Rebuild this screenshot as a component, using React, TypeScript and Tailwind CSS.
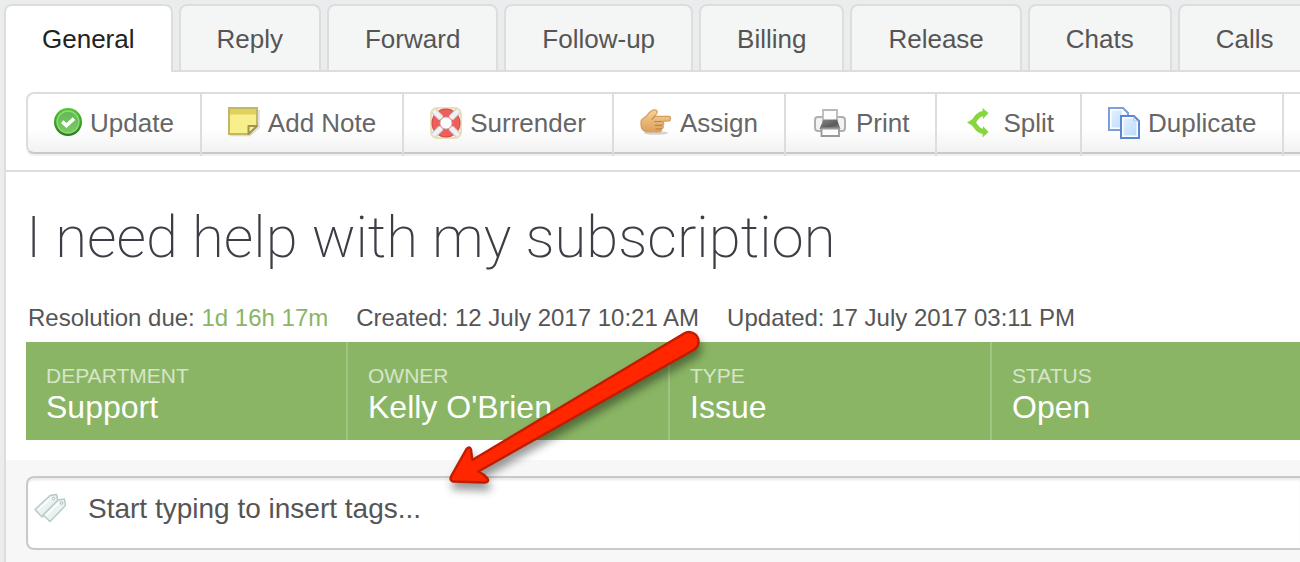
import type { ReactNode } from "react";

const tabs = ["General", "Reply", "Forward", "Follow-up", "Billing", "Release", "Chats", "Calls"];

function CheckIcon() {
  return (
    <svg className="h-8 w-7 shrink-0" viewBox="0 0 28 32" aria-hidden="true">
      <defs>
        <linearGradient id="checkRing" x1="0" y1="0" x2="0" y2="1">
          <stop offset="0" stopColor="#55c832" />
          <stop offset="1" stopColor="#267f1c" />
        </linearGradient>
        <linearGradient id="checkFace" x1="0" y1="0" x2="0" y2="1">
          <stop offset="0" stopColor="#62b956" />
          <stop offset="1" stopColor="#7bcb64" />
        </linearGradient>
      </defs>
      <circle cx="14" cy="15" r="14" fill="url(#checkRing)" />
      <circle cx="14" cy="15" r="11" fill="url(#checkFace)" stroke="#93d97d" strokeWidth="1.300" />
      <path d="M8.200 14.600l4.200 4 7.600-7" fill="none" stroke="#fff" strokeWidth="3.600" />
    </svg>
  );
}

function NoteIcon() {
  return (
    <svg className="h-8 w-8 shrink-0" viewBox="0 0 32 32" aria-hidden="true">
      <path d="M2 28.500h20l9-8V3" fill="none" stroke="#bbb" strokeWidth="1.600" opacity=".5" />
      <path d="M1 1h28v18l-8 8H1z" fill="#f6ef8c" stroke="#c3b767" strokeWidth="2" />
      <path d="M2 2h26v5.500H2z" fill="#e0d05e" />
      <path d="M20.500 27v-8H29z" fill="#f7f0a4" stroke="#a3954a" strokeWidth="2" strokeLinejoin="round" />
    </svg>
  );
}

function BuoyIcon() {
  return (
    <svg className="h-8 w-8 shrink-0" viewBox="0 0 32 32" aria-hidden="true">
      <rect x="1" y="1" width="30" height="30" rx="6" fill="#f8f4e6" stroke="#eadfb8" strokeWidth="2" />
      <circle cx="16" cy="16" r="10" fill="none" stroke="#cf4a4a" strokeWidth="9" />
      <circle cx="16" cy="16" r="10" fill="none" stroke="#ee5f5c" strokeWidth="7" />
      <path
        d="M3.500 3.500l7.500 7.500M28.500 3.500L21 11M3.500 28.500L11 21M28.500 28.500L21 21"
        stroke="#c9c9ce"
        strokeWidth="6.500"
      />
      <path
        d="M3.500 3.500l8 8M28.500 3.500l-8 8M3.500 28.500l8-8M28.500 28.500l-8-8"
        stroke="#f1f1f4"
        strokeWidth="4.500"
      />
      <circle cx="16" cy="16" r="6" fill="#fff" stroke="#cfb0b0" strokeWidth="1" />
    </svg>
  );
}

function HandIcon() {
  return (
    <svg className="h-8 w-8 shrink-0" viewBox="0 0 32 32" aria-hidden="true">
      <defs>
        <linearGradient id="skin" x1="0" y1="0" x2="0" y2="1">
          <stop offset="0" stopColor="#f8d295" />
          <stop offset="1" stopColor="#dca05a" />
        </linearGradient>
      </defs>
      <ellipse cx="16" cy="26" rx="12" ry="1.800" fill="#aaa" opacity=".5" />
      <path
        d="M1 14c0-2 3-3 5.500-5 2-2.400 4.500-6 7.500-6.100 2.600-.2 4 1.600 2.800 3.600L14.500 9.400H29c2 0 2 4.200 0 4.500l-6.500.6c1.700 1 1.600 3 .3 3.800 1 1.300.5 3-1.200 3.500.2 2-.9 3-2.800 3H8C3.500 24.800 1 21.700 1 18z"
        fill="url(#skin)"
        stroke="#d59d5c"
        strokeWidth="1.200"
      />
      <path d="M14 14.500h8M15 18.300h7.500M15.500 21.800h6M14.500 9.600l-3 3" fill="none" stroke="#c08543" strokeWidth="1.200" />
    </svg>
  );
}

function PrinterIcon() {
  return (
    <svg className="h-8 w-9 shrink-0" viewBox="0 0 36 32" aria-hidden="true">
      <defs>
        <linearGradient id="tray" x1="0" y1="0" x2="1" y2="1">
          <stop offset="0" stopColor="#8a8a8a" />
          <stop offset=".6" stopColor="#5c5c5c" />
          <stop offset="1" stopColor="#858585" />
        </linearGradient>
      </defs>
      <rect x="3" y="10" width="30" height="14" rx="3" fill="#f3f3f3" stroke="#b0b0b0" strokeWidth="2" />
      <path d="M11 14V3h14v11z" fill="#fcfcfc" stroke="#b8b8b8" strokeWidth="1.800" />
      <path d="M11.500 12.500h13.500l3.500 9.500h-21z" fill="url(#tray)" />
      <path d="M9.500 21.500h17.500v7.500H9.500z" fill="#fcfcfc" stroke="#999" strokeWidth="1.800" />
    </svg>
  );
}

function SplitIcon() {
  return (
    <svg className="h-8 w-8 shrink-0" viewBox="0 0 32 32" aria-hidden="true">
      <path
        d="M21 6.300C15.500 7 13.500 10.500 10 15.500 13.500 20.500 15.500 24 21 24.700"
        fill="none"
        stroke="#86d640"
        strokeWidth="5"
      />
      <path d="M19.500 1l6 5-5.500 6zM19.500 30.500l6-5.500-5.500-6zM4 15.500l7.500-4.500v9z" fill="#86d640" />
    </svg>
  );
}

function DuplicateIcon() {
  return (
    <svg className="h-8 w-8 shrink-0" viewBox="0 0 32 32" aria-hidden="true">
      <defs>
        <linearGradient id="sheet" x1="0" y1="0" x2="1" y2="1">
          <stop offset="0" stopColor="#e3f0ff" />
          <stop offset="1" stopColor="#bcdafc" />
        </linearGradient>
      </defs>
      <path d="M1 1h14l5 5v17H1z" fill="#fff" stroke="#7b9fde" strokeWidth="2" />
      <path d="M3.500 3.500h10.500v4H18v13H3.500z" fill="url(#sheet)" />
      <path d="M13 9h13l5 5v17H13z" fill="#fff" stroke="#5a86d4" strokeWidth="2" />
      <path d="M15.500 11.500h10V15h3v13.500h-13z" fill="url(#sheet)" />
      <path d="M26 9.500V14h4.500" fill="none" stroke="#9bbbea" strokeWidth="1.200" />
    </svg>
  );
}

function TagsIcon() {
  return (
    <svg className="h-8 w-8 shrink-0" viewBox="0 0 32 32" aria-hidden="true">
      <g fill="#e9f3f2" stroke="#b9caca" strokeWidth="1.500" strokeLinejoin="round">
        <path d="M1 16.500L16 2.500 22.500 1.500 24 8 8 24z" />
        <path d="M9 22L24 7l6.500-1 1 6.500L16 28.500z" />
      </g>
      <path d="M4 17L17.500 4.500M12 22.500L25.500 9" stroke="#fff" strokeWidth="1.400" />
      <g fill="#fff" stroke="#a9baba">
        <circle cx="19.500" cy="5.500" r="1.300" />
        <circle cx="27.500" cy="10" r="1.300" />
      </g>
    </svg>
  );
}

const actions: { label: string; icon: ReactNode }[] = [
  { label: "Update", icon: <CheckIcon /> },
  { label: "Add Note", icon: <NoteIcon /> },
  { label: "Surrender", icon: <BuoyIcon /> },
  { label: "Assign", icon: <HandIcon /> },
  { label: "Print", icon: <PrinterIcon /> },
  { label: "Split", icon: <SplitIcon /> },
  { label: "Duplicate", icon: <DuplicateIcon /> },
];

const properties = [
  { label: "DEPARTMENT", value: "Support" },
  { label: "OWNER", value: "Kelly O'Brien" },
  { label: "TYPE", value: "Issue" },
  { label: "STATUS", value: "Open" },
];

function Arrow() {
  return (
    <svg
      className="pointer-events-none absolute left-[440px] top-[322px] h-[180px] w-[270px] drop-shadow-[2px_7px_4px_rgba(0,0,0,0.4)]"
      viewBox="440 322 270 180"
      aria-hidden="true"
    >
      <path
        d="M684 333.500L472.300 460 471 449.500Q469.500 445.500 466.500 449L451.500 475.500Q449 480.500 453 481.500L484.500 482.500Q489.500 482 487.500 478.500Q484 474 478.300 471.500L694 349.800A9.300 9.300 0 0 0 684 333.500Z"
        fill="#ff2600"
        stroke="#bf1c00"
        strokeWidth="2.400"
        strokeLinejoin="round"
      />
    </svg>
  );
}

export default function App() {
  return (
    <div className="relative flex min-h-screen flex-col overflow-hidden bg-[#ebecee] pl-1 pt-1 font-['Liberation_Sans',Arial,sans-serif] text-[#555]">
      <nav className="flex gap-1.5" role="tablist" aria-label="Ticket sections">
        {tabs.map((tab, i) => (
          <button
            key={tab}
            type="button"
            role="tab"
            aria-selected={i === 0}
            className={
              i === 0
                ? "relative -mb-0.5 h-[68px] shrink-0 rounded-t-lg border-2 border-b-0 border-[#dcdddd] bg-white px-9 text-[26px] text-[#222]"
                : "h-[66px] shrink-0 rounded-t-lg border-2 border-b-0 border-[#dcdddd] bg-[#f4f5f5] px-9 pt-0.5 text-[26px] text-[#555]"
            }
          >
            {tab}
          </button>
        ))}
      </nav>

      <main className="flex flex-1 flex-col border-l-2 border-t-2 border-[#dcdddd] bg-white">
        <div className="border-b-2 border-[#dcdddd] pb-4 pl-5 pt-5">
          <div
            role="toolbar"
            aria-label="Ticket actions"
            className="flex h-[62px] rounded-l-lg border-y-2 border-l-2 border-[#dcdddd] border-b-[#c8c8c8] bg-linear-to-b from-white from-60% to-[#f2f2f2] shadow-[0_2px_0_#f0f0f0]"
          >
            {actions.map(({ label, icon }) => (
              <button
                key={label}
                type="button"
                className="-mb-1 flex shrink-0 items-center gap-2 border-r-2 border-[#dcdddd] px-6.5 pb-1 text-[26px] text-[#666]"
              >
                {icon}
                {label}
              </button>
            ))}
          </div>
        </div>

        <header className="pl-5 pt-8">
          <h1 className="font-['Roboto','Liberation_Sans',sans-serif] text-[58px] font-extralight leading-[66px] text-[#3c3d45]">
            I need help with my subscription
          </h1>
          <div className="mt-[34px] flex h-[38px] gap-7 whitespace-nowrap pl-0.5 text-2xl leading-7">
            <span>
              Resolution due: <span className="text-[#8ab564]">1d 16h 17m</span>
            </span>
            <span>Created: 12 July 2017 10:21 AM</span>
            <span>Updated: 17 July 2017 03:11 PM</span>
          </div>
          <dl className="flex h-[98px] bg-[#8ab564] text-white">
            {properties.map(({ label, value }) => (
              <div
                key={label}
                className="w-[322px] shrink-0 border-r-2 border-white/20 px-5 pt-5 last:w-auto last:flex-1 last:border-r-0"
              >
                <dt className="text-[21px] leading-7 text-white/65">{label}</dt>
                <dd className="text-[32px] leading-[34px]">{value}</dd>
              </div>
            ))}
          </dl>
        </header>

        <section className="mt-5 flex-1 bg-[#f7f7f7] pl-5 pt-4">
          <label className="flex h-[74px] items-center gap-[22px] rounded-l-lg border-2 border-r-0 border-[#c9c9c9] bg-white pb-2 pl-1.5 shadow-[inset_0_3px_3px_-1px_#e8e8e8]">
            <TagsIcon />
            <input
              type="text"
              aria-label="Tags"
              placeholder="Start typing to insert tags..."
              className="min-w-0 flex-1 bg-transparent text-[28px] leading-9 text-[#555] outline-none placeholder:text-[#555]"
            />
          </label>
        </section>
      </main>

      <Arrow />
    </div>
  );
}
